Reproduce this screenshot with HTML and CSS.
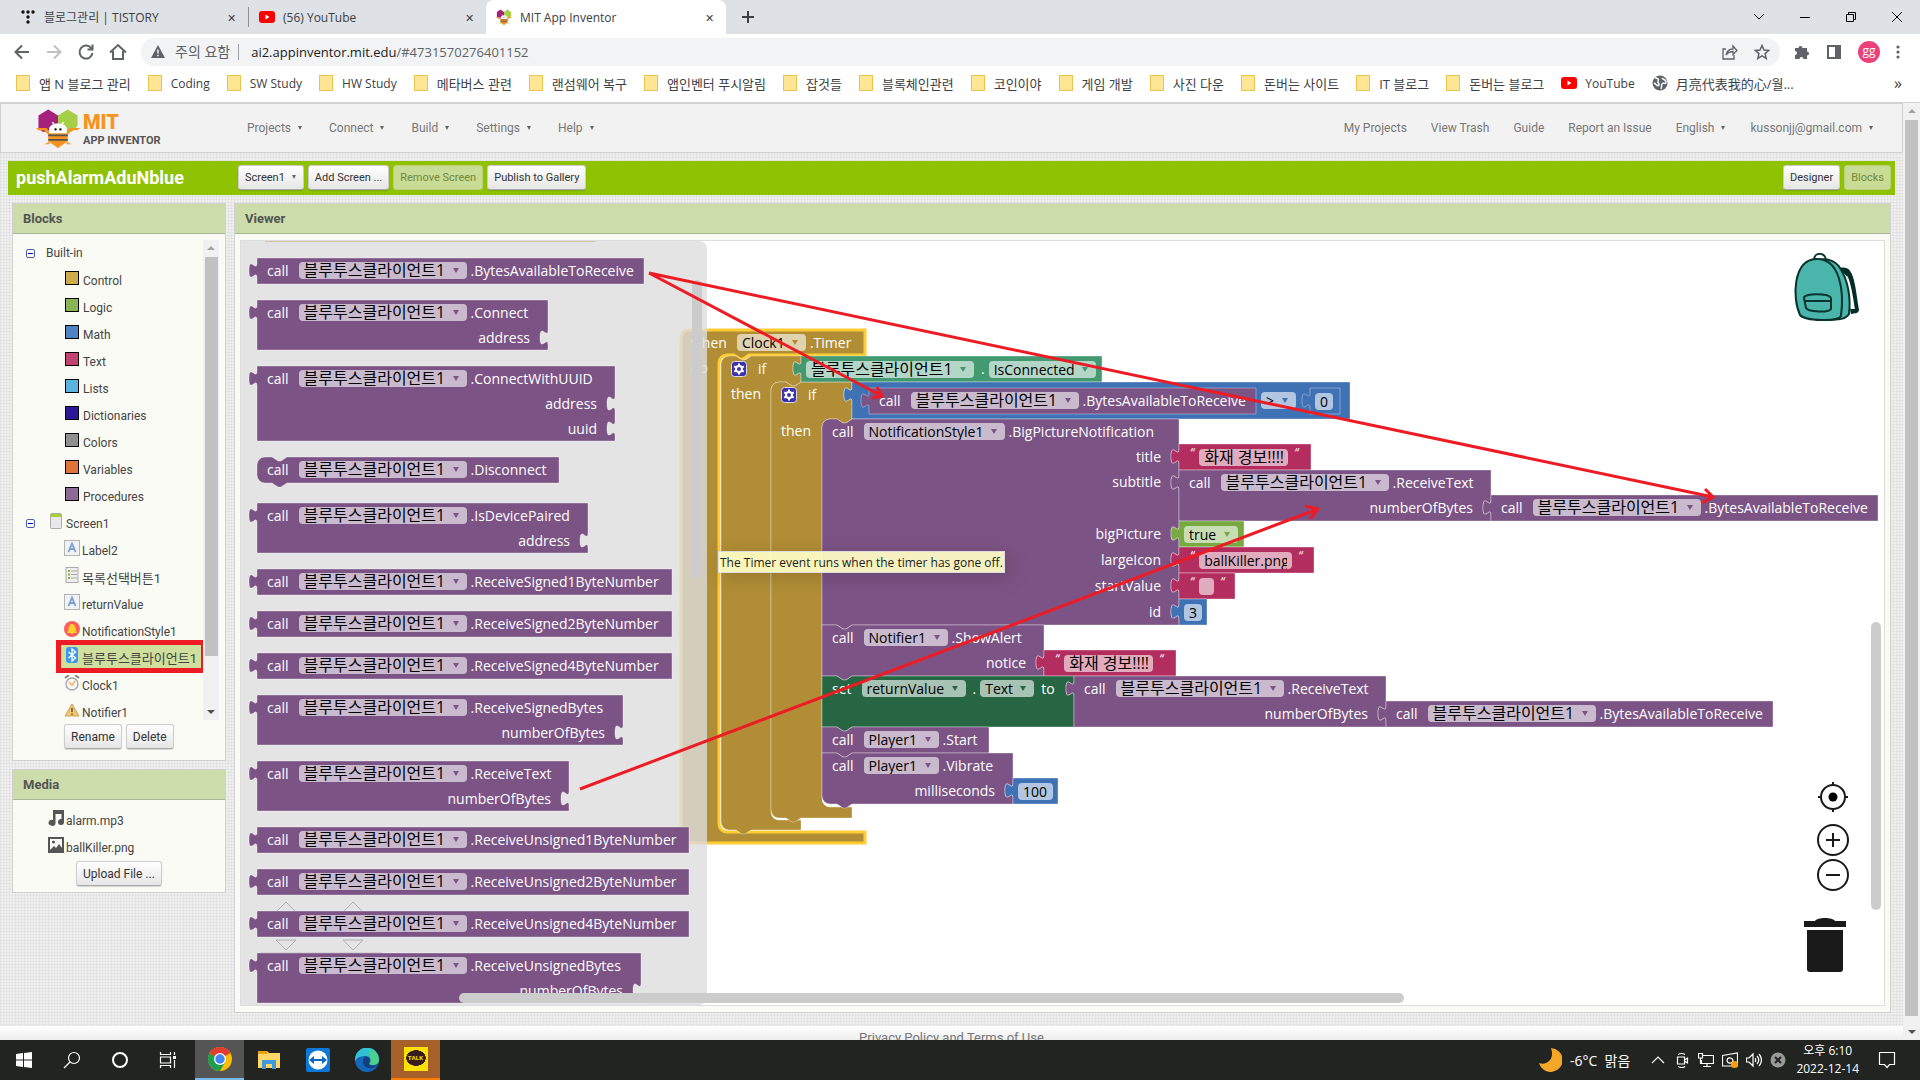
FILE: index.html
```html
<!DOCTYPE html>
<html lang="ko">
<head>
  <meta charset="UTF-8">
  <meta name="viewport" content="width=device-width, initial-scale=1.0">
  <title>MIT App Inventor</title>
  <link rel="stylesheet" href="styles.css">
</head>
<body>

<!-- browser tabs -->
<div class="tabs">
  <div class="tab">
    <svg class="favicon" width="16" height="16" viewBox="0 0 16 16"><g fill="#111"><circle cx="3" cy="3" r="1.7"/><circle cx="8" cy="3" r="1.7"/><circle cx="13" cy="3" r="1.7"/><circle cx="8" cy="8" r="1.7"/><circle cx="8" cy="13" r="1.7"/></g></svg>
    <span>블로그관리 | TISTORY</span><button class="tab-close">✕</button>
  </div>
  <div class="tab split">
    <svg class="favicon" width="16" height="16" viewBox="0 0 16 16"><rect y="2" width="16" height="12" rx="3" fill="#f00"/><path d="M6.5 5.5v5l4-2.5z" fill="#fff"/></svg>
    <span>(56) YouTube</span><button class="tab-close">✕</button>
  </div>
  <div class="tab active">
    <svg class="favicon" width="16" height="16" viewBox="0 0 54 54"><use href="#bee"/></svg>
    <span>MIT App Inventor</span><button class="tab-close">✕</button>
  </div>
  <button class="tab-new"><svg width="12" height="12" viewBox="0 0 12 12"><path d="M6 0v12M0 6h12" stroke="#3c4043" stroke-width="2"/></svg></button>
  <div class="window-buttons">
    <button><svg width="12" height="12" viewBox="0 0 12 12"><path d="M1 3l5 5 5-5" class="line"/></svg></button>
    <button><svg width="12" height="12" viewBox="0 0 12 12"><path d="M1 6.500h10" class="line"/></svg></button>
    <button><svg width="12" height="12" viewBox="0 0 12 12"><path d="M1.500 3.500h7v7h-7zM3.500 3.500v-2h7v7h-2" class="line"/></svg></button>
    <button><svg width="12" height="12" viewBox="0 0 12 12"><path d="M1 1l10 10M11 1L1 11" class="line"/></svg></button>
  </div>
</div>

<!-- address bar -->
<div class="toolbar">
  <button class="nav-btn"><svg width="18" height="18" viewBox="0 0 18 18"><path d="M16 9H3M9 2.500L2.500 9 9 15.500" class="nav-line"/></svg></button>
  <button class="nav-btn off"><svg width="18" height="18" viewBox="0 0 18 18"><path d="M2 9h13M9 2.500L15.500 9 9 15.500" class="nav-line"/></svg></button>
  <button class="nav-btn"><svg width="18" height="18" viewBox="0 0 18 18"><path d="M14.500 5.500A6.500 6.500 0 1 0 15.500 10M15.500 1.500v5h-5" class="nav-line"/></svg></button>
  <button class="nav-btn"><svg width="18" height="18" viewBox="0 0 18 18"><path d="M1 9.500L9 2l8 7.500M4 8v8h10V8" class="nav-line"/></svg></button>
  <div class="omnibox">
    <svg width="14" height="14" viewBox="0 0 14 14"><path d="M7 0l7 13H0z" fill="#5f6368"/><path d="M7 4.500v4M7 9.800v1.500" stroke="#fff" stroke-width="1.400"/></svg>
    <span class="warn">주의 요함</span>
    <span class="url"><b>ai2.appinventor.mit.edu</b>/#4731570276401152</span>
    <svg width="16" height="16" viewBox="0 0 16 16"><path d="M4 5H1v10h11v-4M4 11c1-4 3-6 7-6V2l4 4.500-4 4v-3c-3 0-5 1-7 3.500z" fill="none" stroke="#5f6368" stroke-width="1.300"/></svg>
    <svg width="16" height="16" viewBox="0 0 16 16"><path d="M8 1.500l2 4.500 4.700.4-3.600 3.200 1.100 4.800L8 11.900l-4.200 2.500 1.100-4.800L1.300 6.400 6 6z" fill="none" stroke="#5f6368" stroke-width="1.500"/></svg>
  </div>
  <div class="extensions">
    <svg width="16" height="16" viewBox="0 0 16 16"><path d="M1 4h3.500a2 2 0 1 1 4 0H13v3.500a2 2 0 1 1 0 4V15H9.500a2 2 0 0 0-4 0H1v-4a2 2 0 0 0 0-4z" fill="#5f6368"/></svg>
    <svg width="16" height="16" viewBox="0 0 16 16"><path d="M1 1h14v14H1z" fill="#5f6368"/><path d="M3 3h6v10H3z" fill="#fff"/></svg>
    <span class="avatar">gg</span>
    <svg width="4" height="16" viewBox="0 0 4 16"><g fill="#5f6368"><circle cx="2" cy="3" r="1.600"/><circle cx="2" cy="8" r="1.600"/><circle cx="2" cy="13" r="1.600"/></g></svg>
  </div>
</div>

<nav class="bookmarks">
  <a href="#" class="folder ko">앱 N 블로그 관리</a>
  <a href="#" class="folder">Coding</a>
  <a href="#" class="folder">SW Study</a>
  <a href="#" class="folder">HW Study</a>
  <a href="#" class="folder ko">메타버스 관련</a>
  <a href="#" class="folder ko">랜섬웨어 복구</a>
  <a href="#" class="folder ko">앱인벤터 푸시알림</a>
  <a href="#" class="folder ko">잡것들</a>
  <a href="#" class="folder ko">블록체인관련</a>
  <a href="#" class="folder ko">코인이야</a>
  <a href="#" class="folder ko">게임 개발</a>
  <a href="#" class="folder ko">사진 다운</a>
  <a href="#" class="folder ko">돈버는 사이트</a>
  <a href="#" class="folder ko">IT 블로그</a>
  <a href="#" class="folder ko">돈버는 블로그</a>
  <a href="#"><svg width="16" height="16" viewBox="0 0 16 16"><rect y="2" width="16" height="12" rx="3" fill="#f00"/><path d="M6.500 5.500v5l4-2.500z" fill="#fff"/></svg>YouTube</a>
  <a href="#" class="ko"><svg width="16" height="16" viewBox="0 0 16 16"><circle cx="8" cy="8" r="7.500" fill="#5f6368"/><path d="M3 3c3 0 4 1 3 3s2 2 1 4-3-1-5-2M10 3c1 2 4 1 4 4s-3 0-4 2 0 3-1 5" fill="none" stroke="#fff" stroke-width="1.500"/></svg>月亮代表我的心/월...</a>
  <span class="more">»</span>
</nav>

<div class="page">
  <div class="app">
    <header class="app-header">
      <svg width="44" height="40" viewBox="0 0 54 54" preserveAspectRatio="none">
        <g id="bee">
          <path d="M3 10L15 2l12 8v17l-8 5H8l-5-5z" fill="#a5217c"/>
          <path d="M27 10l12-8 12 8v14l-7 8H32l-5-5z" fill="#a4cf46"/>
          <path d="M0 27h13l3 4h22l3-4h13l-3 3h-7l-7 8H17l-7-8H3z" fill="#f7931e"/>
          <path d="M15 33h24v12l-12 9-12-9z" fill="#f7931e"/>
          <path d="M10 49h6l3-9h16l3 9h6l-8-4-9 9-9-9z" fill="#f7931e"/>
          <path d="M15 37h24M15 43h24" stroke="#555" stroke-width="2.500"/>
          <path d="M16 34V29c0-5 5-8 11-8s11 3 11 8v5z" fill="#fff"/>
          <path d="M23 23l-3-4M31 23l3-4" stroke="#fff" stroke-width="2"/>
          <circle cx="24" cy="29" r="1.500"/><circle cx="30" cy="29" r="1.500"/>
        </g>
      </svg>
      <div class="brand"><strong>MIT</strong><span>APP INVENTOR</span></div>
      <div class="menu">
        <button class="drop">Projects</button>
        <button class="drop">Connect</button>
        <button class="drop">Build</button>
        <button class="drop">Settings</button>
        <button class="drop">Help</button>
      </div>
      <div class="menu right">
        <a href="#">My Projects</a>
        <a href="#">View Trash</a>
        <a href="#">Guide</a>
        <a href="#">Report an Issue</a>
        <button class="drop">English</button>
        <button class="drop">kussonjj@gmail.com</button>
      </div>
    </header>

    <div class="project-bar">
      <h1>pushAlarmAduNblue</h1>
      <button class="btn small drop">Screen1</button>
      <button class="btn small">Add Screen ...</button>
      <button class="btn small" disabled>Remove Screen</button>
      <button class="btn small">Publish to Gallery</button>
      <span class="spacer"></span>
      <button class="btn small">Designer</button>
      <button class="btn small" disabled>Blocks</button>
    </div>

    <main>
      <aside>
        <section class="panel">
          <h2>Blocks</h2>
          <div class="tree-box">
            <ul class="tree" id="tree"></ul>
            <div class="scrollbar"><i></i></div>
          </div>
          <div class="actions">
            <button class="btn">Rename</button>
            <button class="btn">Delete</button>
          </div>
        </section>
        <section class="panel media">
          <h2>Media</h2>
          <ul>
            <li><svg width="16" height="16" viewBox="0 0 16 16"><path d="M5 0h11v12a3 3 0 1 1-2.500-3V4H7.500v9A3.500 3 0 1 1 5 10z" fill="#555"/></svg>alarm.mp3</li>
            <li><svg width="16" height="16" viewBox="0 0 16 16"><path d="M0 0h16v16H0zM2 2v11l4-4 2 2 3-4 3 4V2z" fill="#555" fill-rule="evenodd"/><circle cx="5.500" cy="5" r="1.500" fill="#555"/></svg>ballKiller.png</li>
          </ul>
          <button class="btn">Upload File ...</button>
        </section>
      </aside>

      <section class="panel viewer">
        <h2>Viewer</h2>
        <div class="workspace" id="workspace">
          <div id="canvas"></div>
          <svg class="backpack" width="68" height="70" viewBox="0 0 68 70">
            <path d="M46 15c14-3 15 8 20 42-1 4-4 3-8 4l-1-5 3-1c-2-20-3-32-11-36z" fill="#052d28"/>
            <path d="M54 22c5 10 7 30 8 34h-4z" fill="#fff"/>
            <path d="M26 7c8-2 17 1 21 8 8 12 11 30 9 46-3 5-10 6-22 6z" fill="#49b5ab" stroke="#08332e" stroke-width="2"/>
            <path d="M7 62C-1 45 0 7 23 6c25-1 28 34 25 57-3 6-36 5-41-1z" fill="#49b5ab" stroke="#08332e" stroke-width="2"/>
            <path d="M21 6c1-7 11-7 12 1M11 45c-1-5 25-5 27 0v11c-2 4-23 3-25-1zM12 48h26" fill="none" stroke="#08332e" stroke-width="2"/>
          </svg>
          <div class="zoom">
            <button><svg width="32" height="32" viewBox="0 0 32 32"><circle cx="16" cy="16" r="12" class="ring"/><circle cx="16" cy="16" r="4.500"/><path d="M16 1v4M16 27v4M1 16h4M27 16h4" class="ring"/></svg></button>
            <button><svg width="32" height="32" viewBox="0 0 32 32"><circle cx="16" cy="16" r="15" class="ring"/><path d="M16 9v14M9 16h14" class="ring"/></svg></button>
            <button><svg width="32" height="32" viewBox="0 0 32 32"><circle cx="16" cy="16" r="15" class="ring"/><path d="M9 16h14" class="ring"/></svg></button>
          </div>
          <svg class="trash" width="42" height="54" viewBox="0 0 42 54"><path d="M0 3h11c2-4 18-4 20 0h11v6H0zM3 12h36v39q0 3-3 3H6q-3 0-3-3z" fill="#1a1a1a"/></svg>
          <svg class="ghost" width="130" height="56" viewBox="0 0 130 56"><path d="M16 12L26 2l10 10zM83 12L93 2l10 10zM16 40l10 10 10-10zM83 40l10 10 10-10zM0 53h122" fill="none" stroke="#000"/></svg>
          <div class="flyout" id="flyout"></div>
          <i class="bar flyout-bar"></i>
          <i class="bar v-bar"></i>
          <i class="bar h-bar"></i>
          <div class="tooltip">The Timer event runs when the timer has gone off.</div>
          <svg class="arrows" width="1640" height="760" viewBox="0 0 1640 760">
            <path d="M408 32L641 155M636 146l5 9-10 2M408 32l1064 224M1464 248l8 8-11 6M339 548l738-280M1064 265l13 3-8 10"/>
          </svg>
        </div>
      </section>
    </main>
    <footer><a href="#">Privacy Policy and Terms of Use</a></footer>
  </div>
  <div class="scrollbar page-scroll"><i></i></div>
</div>

<div class="taskbar">
  <button><svg width="16" height="16" viewBox="0 0 16 16"><path d="M0 2l7-1v6.500H0zM8 1l8-1v7.500H8zM0 8.500h7V15l-7-1zM8 8.500h8V16l-8-1z" fill="#fff"/></svg></button>
  <button><svg width="18" height="18" viewBox="0 0 18 18"><path d="M7 11l-6 6" class="tray-line"/><circle cx="11" cy="7" r="5.500" class="tray-line"/></svg></button>
  <button><svg width="18" height="18" viewBox="0 0 18 18"><circle cx="9" cy="9" r="7" fill="none" stroke="#fff" stroke-width="2"/></svg></button>
  <button><svg width="18" height="18" viewBox="0 0 18 18"><path d="M1.500 1v2.500h10V1M1.500 6h10v6h-10zM1.500 17v-2.500h10V17M15.500 1v3M15.500 9v8" class="tray-line"/><path d="M14 5h3v3h-3z" fill="#fff"/></svg></button>
  <button class="wide running"><svg width="24" height="24" viewBox="0 0 24 24"><circle cx="12" cy="12" r="12" fill="#fbbc05"/><path d="M12 12L1.600 6A12 12 0 0 0 12 24l5-9z" fill="#1e9d4d"/><path d="M12 12L1.600 6a12 12 0 0 1 20.800 0z" fill="#e33b2e"/><circle cx="12" cy="12" r="6" fill="#fff"/><circle cx="12" cy="12" r="4.700" fill="#4285f4"/></svg></button>
  <button class="wide"><svg width="22" height="20" viewBox="0 0 22 20"><path d="M0 1h9l2 2h11v15H0z" fill="#ffd766"/><path d="M0 1h9l1 3H0z" fill="#e6a117"/><path d="M4 19v-9h14v9h-4v-5H8v5z" fill="#3f9be0"/></svg></button>
  <button class="wide"><svg width="24" height="24" viewBox="0 0 24 24"><rect width="24" height="24" rx="2" fill="#0e78d8"/><circle cx="12" cy="12" r="9.500" fill="#fff"/><path d="M3 12l5-4v3h8V8l5 4-5 4v-3H8v3z" fill="#0e66c0"/></svg></button>
  <button class="wide"><svg width="24" height="24" viewBox="0 0 24 24"><circle cx="12" cy="12" r="12" fill="#1467b8"/><path d="M0 11A12 12 0 0 1 24 12c0 5-7 6-10 4 4-3 1-8-3-8C5 8 1 10 0 14z" fill="#33bfd4"/><path d="M14 1a12 12 0 0 1 10 11c0 5-7 6-10 4 2-2 2-4 1-6z" fill="#55d86a" opacity=".7"/><path d="M8 13c0-3 2-5 4-4 3 1 3 4 2 7 2 2 6 2 9 0-3 6-15 6-15-3z" fill="#123f80"/></svg></button>
  <button class="wide alert"><span class="talk">TALK</span></button>
  <div class="tray">
    <svg width="24" height="24" viewBox="0 0 24 24"><path d="M13 0a12 12 0 1 1-12 15C9 18 17 11 13 0z" fill="#f6a728"/></svg>
    <span class="weather">-6°C&nbsp; 맑음</span>
    <svg width="16" height="16" viewBox="0 0 16 16"><path d="M2 11l6-6 6 6" class="tray-line"/></svg>
    <svg width="16" height="16" viewBox="0 0 16 16"><path d="M3.500 5h7v7h-7zM10.500 8l3-2v5l-3-2M4 2.500q4-2 7 0M4 14.500q4 2 7 0" class="tray-line"/></svg>
    <svg width="16" height="16" viewBox="0 0 16 16"><path d="M5 3.500h10.500v8H3.500V8M9 12v3M5 14.500h8M.5 1.500h4V6h-4zM2.500 6v6" class="tray-line"/></svg>
    <svg width="16" height="16" viewBox="0 0 16 16"><path d="M.5 3.500L15.500 1v13L.5 14zM5 9c0-4 5-4 6-1M11 8c0 4-5 4-6 1" class="tray-line"/><circle cx="12.500" cy="12.500" r="3.500" fill="#ff9d0a"/></svg>
    <svg width="16" height="16" viewBox="0 0 16 16"><path d="M.5 6h2.500l4-4v12l-4-4H.5zM9 6q1.500 2 0 4M11 4q3.500 4 0 8M13 2q5 6 0 12" class="tray-line"/></svg>
    <svg width="16" height="16" viewBox="0 0 16 16"><circle cx="8" cy="8" r="7.500" fill="#999"/><path d="M5 5l6 6M11 5l-6 6" stroke="#222" stroke-width="2"/></svg>
    <div class="clock">오후 6:10<br>2022-12-14</div>
    <svg width="18" height="18" viewBox="0 0 18 18"><path d="M1.500 1.500h15v12h-5l-2.500 3-2.500-3h-5z" class="tray-line"/></svg>
  </div>
</div>

<script src="blocks.js"></script>
</body>
</html>
```
FILE: styles.css
```css
* { box-sizing: border-box; }
body {
  margin: 0; height: 100vh; display: flex; flex-direction: column; overflow: hidden;
  font-family: Roboto, "Noto Sans CJK KR", sans-serif; font-size: 12px; color: #444; background: #fff;
}
button { font-family: inherit; font-size: inherit; color: inherit; background: none; border: none; padding: 0; cursor: pointer; }
a { color: inherit; text-decoration: none; }
ul { list-style: none; margin: 0; padding: 0; }
svg { display: block; flex: none; }
.line { fill: none; stroke: #000; }
.spacer { flex: 1; }

/* browser */
.tabs, .toolbar, .bookmarks { font-family: "Open Sans", "Noto Sans CJK KR", sans-serif; color: #3c4043; flex: none; display: flex; align-items: center; }
.tabs { height: 34px; background: #dee1e6; }
.tab { width: 240px; height: 34px; padding: 0 12px 0 10px; display: flex; align-items: center; gap: 8px; }
.tab:first-child { width: 248px; padding-left: 20px; }
.tab span { flex: 1; white-space: nowrap; }
.tab.split { border-left: 1px solid #8c9096; width: 238px; height: 20px; }
.tab.active { background: #fff; border-radius: 8px 8px 0 0; width: 240px; }
.tab-close { font-size: 11px; width: 10px; }
.tab-new { margin-left: 16px; }
.window-buttons { margin-left: auto; display: flex; margin-right: 17px; gap: 34px; }
.toolbar { height: 36px; padding: 0 20px 0 13px; }
.nav-btn { margin-right: 14px; }
.nav-btn.off { opacity: .4; }
.nav-line { fill: none; stroke: #5f6368; stroke-width: 2; }
.omnibox { flex: 1; height: 28px; border-radius: 14px; background: #f1f3f4; display: flex; align-items: center; padding: 0 10px; gap: 10px; font-size: 13px; color: #5f6368; }
.omnibox svg:last-child { margin-left: 6px; }
.warn { font-size: 14px; padding-right: 8px; margin-right: 2px; border-right: 1px solid #9aa0a6; line-height: 16px; }
.url { flex: 1; }
.url b { font-weight: normal; color: #202124; }
.extensions { display: flex; align-items: center; gap: 16px; margin-left: 14px; }
.avatar { width: 22px; height: 22px; border-radius: 50%; background: #ec407a; color: #fff; text-align: center; line-height: 19px; }
.bookmarks { height: 33px; padding: 0 18px 6px 16px; gap: 17px; border-bottom: 1px solid #d5d5d5; white-space: nowrap; }
.bookmarks a { display: flex; align-items: center; gap: 8px; }
.bookmarks .ko { font-size: 13px; }
.folder::before { content: ""; width: 12px; height: 14px; background: #ffe694; border: 1px solid #e8c44e; margin-right: 1px; }
.more { margin-left: auto; font-size: 16px; }

/* page frame */
.page { flex: 1; min-height: 0; display: flex; }
.app { flex: 1; min-width: 0; display: flex; flex-direction: column;
  background: repeating-linear-gradient(90deg, rgba(0,0,0,.04) 0 1px, transparent 1px 3px), repeating-linear-gradient(rgba(0,0,0,.04) 0 1px, transparent 1px 3px) #efefef; }
.scrollbar { width: 17px; background: #f1f1f1; display: flex; flex-direction: column; align-items: center; justify-content: space-between; padding: 6px 0; }
.scrollbar::before, .scrollbar::after { content: ""; border: 4px solid transparent; border-top: none; border-bottom-color: #a3a3a3; }
.scrollbar::after { border-bottom: none; border-top: 4px solid #505050; }
.scrollbar i { width: 13px; background: #c1c1c1; flex: 1; margin: 7px 0 54px; }
.page-scroll i { margin-bottom: 14px; }

.app-header { height: 50px; flex: none; background: #f2f2f2; border: 1px solid #d0d0d0; display: flex; align-items: center; padding: 0 28px 0 35px; color: #777; }
.brand { width: 75px; margin: 0 89px 0 3px; font-weight: bold; white-space: nowrap; }
.brand strong { display: block; color: #f7931e; font-size: 20px; line-height: 24px; }
.brand span { font-size: 11px; line-height: 13px; color: #555; display: block; }
.menu { display: flex; gap: 26px; }
.menu.right { margin-left: auto; gap: 24px; }
.drop::after { content: ""; display: inline-block; border: 2px solid transparent; border-top: 4px solid #666; border-bottom: none; margin: 0 1px 2px 7px; }

.project-bar { flex: none; height: 34px; margin: 8px; padding: 0 4px 2px 8px; background: #8fc202; display: flex; align-items: center; gap: 4px; }
.project-bar h1 { margin: 0; width: 218px; font-size: 18px; color: #fff; }
.btn { height: 25px; padding: 0 6px; border: 1px solid #ccc; border-bottom-color: #aaa; border-radius: 3px; background: linear-gradient(#fff, #e6e6e6); color: #333; box-shadow: 0 1px 1px rgba(0,0,0,.15); white-space: nowrap; }
.btn.small { font-size: 11px; }
.btn:disabled { background: #c9dc95; border-color: #b9d173; color: #71883b; box-shadow: none; }

main { flex: 1; min-height: 0; display: flex; align-items: stretch; gap: 8px; padding: 0 12px 13px; }
aside { width: 214px; display: flex; flex-direction: column; gap: 8px; }
.panel { background: #fafbf4; border: 1px solid #d0d0d0; }
.panel h2 { margin: 0; height: 30px; line-height: 29px; padding-left: 10px; font-size: 13px; background: #ccdcaa; border-bottom: 1px solid #aab895; color: #555; }
.tree-box { display: flex; height: 480px; margin: 6px 6px 4px 0; overflow: hidden; }
.tree { flex: 1; padding-left: 13px; white-space: nowrap; }
.tree li { height: 27px; display: flex; align-items: center; padding: 2px 0 0 38px; gap: 2px; width: 177px; }
.tree .ko { font-size: 13px; }
.tree li svg { margin: -6px 0 0 0; }
.tree li.root { padding-left: 0; gap: 11px; height: 26px; padding-top: 0; }
.tree li.screen { padding-left: 0; gap: 2px; }
.tree li.screen svg { margin-left: 11px; }
.toggle { width: 9px; height: 9px; border: 1px solid #4b5fa8; border-radius: 2px; background: #fff; display: flex; align-items: center; }
.toggle::before { content: ""; width: 5px; height: 1px; background: #00c; margin-left: 1px; }
.tree .swatch { width: 14px; height: 14px; border: 1px solid #000; margin: -6px 2px 0 1px; }
.tree li.selected { background: #cfdf9e; outline: 5px solid #ed1c24; height: 23px; margin: 1px 0 3px 35px; padding-left: 3px; width: 140px; }
.actions { padding: 0 0 11px 51px; display: flex; gap: 4px; }
.media { padding-bottom: 6px; }
.media ul { padding: 7px 0 0 35px; }
.media li { height: 27px; display: flex; align-items: center; gap: 2px; }
.media li svg { margin-top: -5px; }
.media .btn { margin: 0 0 0 63px; display: block; }

.viewer { flex: 1; min-width: 0; display: flex; flex-direction: column; }
.workspace { flex: 1; min-height: 0; position: relative; overflow: hidden; margin: 6px 5px; border: 1px solid #ddd; background: #fff; font: 14px "Open Sans", "Noto Sans CJK KR", sans-serif; }
.backpack { position: absolute; top: 12px; right: 23px; }
.zoom { position: absolute; right: 35px; bottom: 114px; display: flex; flex-direction: column; gap: 3px; }
.zoom button:first-child { margin-bottom: 8px; }
.ring { fill: none; stroke: #1a1a1a; stroke-width: 2; }
.trash { position: absolute; right: 38px; bottom: 33px; }
.ghost { position: absolute; left: 19px; top: 659px; }
.flyout { position: absolute; left: 0; top: 0; bottom: 0; width: 466px; padding: 17px 16px; background: rgba(221,221,221,.8); border-radius: 0 8px 8px 0; display: flex; flex-direction: column; align-items: flex-start; gap: 16px; overflow: hidden; }
.flyout::before { content: ""; position: absolute; left: 24px; top: 0; width: 330px; height: 1px; background: #cfc3a4; }
.flyout .block { position: relative; flex: none; }
.flyout .stack { margin-bottom: 4px; }
.bar { position: absolute; border-radius: 5px; background: #ccc; }
.flyout-bar { left: 451px; top: 39px; width: 10px; height: 298px; }
.v-bar { right: 3px; top: 381px; width: 10px; height: 288px; }
.h-bar { left: 218px; bottom: 2px; width: 945px; height: 10px; }
.tooltip { position: absolute; left: 477px; top: 310px; padding: 2px 1px; height: 22px; font-size: 12px; line-height: 17px; color: #222; background: rgba(255,255,199,.92); border: 1px solid #ddd; box-shadow: 4px 4px 20px 1px rgba(0,0,0,.15); white-space: nowrap; }
.arrows { position: absolute; left: 0; top: 0; fill: none; stroke: #ed1c24; stroke-width: 3; pointer-events: none; }

/* blocks */
.block { position: absolute; color: #fff; }
.shape { position: absolute; left: 0; top: 0; overflow: visible; stroke: rgba(255,255,255,.35); stroke-width: 1; }
.hat .shape { stroke: #fc3; stroke-width: 3; }
.row { position: relative; height: 25px; line-height: 24px; padding-left: 10px; display: flex; align-items: center; white-space: nowrap; }
.row.bare { padding-left: 5px; }
.row.arg { justify-content: flex-end; padding-right: 18px; }
.row.filled { height: 26px; }
.row.tall { height: 51px; align-items: flex-start; }
.row.gap { height: 11px; }
.word { margin-right: 10px; }
.dot { margin: 0 4px 0 3px; }
.field { position: relative; margin-right: 4px; display: flex; align-items: center; }
.field::after { content: ""; position: absolute; right: 8px; border: 3px solid transparent; border-top: 5px solid var(--c); border-bottom: none; }
.field select, .row input { appearance: none; margin: 0; height: 17px; line-height: 17px; padding: 0 21px 0 5px; border: none; border-radius: 4px; background: rgba(255,255,255,.6); font-family: inherit; font-size: 14px; color: #000; }
.row input { padding: 0 5px; }
.row .ko { font-size: 16px; }
.quote { margin: -8px 5px 0 6px; font-size: 12px; font-style: italic; }
.gear { margin-right: 11px; }
.op { padding-left: 409px; height: 37px; }

footer { height: 14px; flex: none; background: linear-gradient(#fff, #eee); text-align: center; overflow: hidden; color: #777; padding-top: 4px; font-size: 13px; }

/* taskbar */
.taskbar { height: 40px; flex: none; background: #222422; display: flex; color: #fff; font-family: "Open Sans", "Noto Sans CJK KR", sans-serif; }
.taskbar button { width: 48px; display: flex; align-items: center; justify-content: center; }
.taskbar .wide { width: 49px; }
.taskbar .running { background: #555; border-bottom: 2px solid #76b9ed; margin-left: 3px; }
.taskbar .alert { background: #a8602a; border-bottom: 2px solid #ff7b00; }
.talk { width: 24px; height: 24px; background: #fae100; color: #fae100; font-size: 6px; font-weight: bold; line-height: 22px; background-image: radial-gradient(ellipse 10px 8px at 12px 11px, #371d1e 95%, transparent); }
.tray-line { fill: none; stroke: #fff; stroke-width: 1.2; }
.tray { margin-left: auto; display: flex; align-items: center; gap: 8px; padding-right: 24px; }
.weather { font-size: 14px; margin-right: 12px; }
.clock { text-align: center; line-height: 18px; margin: 0 11px 0 2px; }
```
FILE: blocks.js
```js
const BT = '블루투스클라이언트1';
const PURPLE = '#7c5385', GOLD = '#b18e35', BLUE = '#3f71b5', PINK = '#b32d5e', GREEN = '#439970', DARK = '#266643', LIME = '#77ab41';

const isKo = t => /[가-힣]/.test(t) ? 'ko' : '';
const select = t => `<span class="field"><select class="${isKo(t)}" aria-label="${t}"><option>${t}</option></select></span>`;
const input = (t, w) => `<input class="${isKo(t)}" aria-label="value" value="${t}" style="width:${w}px">`;
const word = t => `<span class="word">${t}</span>`;
const gear = `<svg class="gear" width="16" height="16" viewBox="0 0 16 16"><rect x=".5" y=".5" width="15" height="15" rx="3" fill="#3c32b0" stroke="#ddd"/><circle cx="8" cy="8" r="3" fill="none" stroke="#fff" stroke-width="2"/><path d="M8 2.500v2M8 11.500v2M3.200 5.300l1.800 1M11 9.700l1.800 1M3.200 10.700l1.800-1M11 6.300l1.800-1" stroke="#fff" stroke-width="2"/></svg>`;
const row = (html, cls = '') => `<div class="row ${cls}">${html}</div>`;
const call = (comp, method) => row(word('call') + select(comp) + method);
const text = (t, w) => row(`<span class="quote">“</span>${input(t, w)}<span class="quote">“</span>`, 'bare filled');

function outline(b) {
  const socket = y => `V${y + 5}c0 10 -8 -8 -8 7.5s8 -2.5 8 7.5`;
  let d = 'M0 0';
  if (b.stack) d = (b.first ? 'M0 8A8 8 0 0 1 8 0' : 'M0 0') + 'H15l6 4 3 0 6 -4';
  d += `H${b.w}` + (b.sockets || []).map(socket).join('') + `V${b.h}`;
  if (b.stack) d += 'H30l-6 4 -3 0 -6 -4' + (b.last ? 'H8a8 8 0 0 1 -8 -8' : 'H0');
  else d += 'H0V20c0 -10 -8 8 -8 -7.5s8 2.5 8 -7.5';
  return d + 'Z';
}

function addBlock(parent, b) {
  const el = document.createElement('div');
  el.className = 'block ' + (b.stack ? 'stack ' : '') + (b.cls || '');
  el.style.cssText = `width:${b.w}px;height:${b.h}px;--c:${b.color}`;
  if (b.x !== undefined) el.style.cssText += `;left:${b.x}px;top:${b.y}px`;
  el.innerHTML = `<svg class="shape" width="${b.w}" height="${b.h}"><path d="${b.path || outline(b)}" fill="${b.color}"/></svg>` + b.rows;
  parent.appendChild(el);
}

// flyout: [method, width, arguments]
[
  ['BytesAvailableToReceive', 387], ['Connect', 291, 'address'], ['ConnectWithUUID', 358, 'address', 'uuid'],
  ['Disconnect', 302], ['IsDevicePaired', 331, 'address'], ['ReceiveSigned1ByteNumber', 415],
  ['ReceiveSigned2ByteNumber', 415], ['ReceiveSigned4ByteNumber', 415], ['ReceiveSignedBytes', 366, 'numberOfBytes'],
  ['ReceiveText', 312, 'numberOfBytes'], ['ReceiveUnsigned1ByteNumber', 432], ['ReceiveUnsigned2ByteNumber', 432],
  ['ReceiveUnsigned4ByteNumber', 432], ['ReceiveUnsignedBytes', 384, 'numberOfBytes']
].forEach(([name, w, ...args]) => addBlock(document.getElementById('flyout'), {
  w, h: args.length ? 25 + args.length * 25 : 26, color: PURPLE,
  stack: name === 'Disconnect', first: true, last: true,
  sockets: args.map((a, i) => 25 + i * 25),
  rows: call(BT, '.' + name) + args.map(a => row(a, 'arg')).join('')
}));

// blocks on the workspace
const receive = (x, y) => [
  { x, y, w: 312, h: 51, color: PURPLE, sockets: [25], rows: call(BT, '.ReceiveText') + row('numberOfBytes', 'arg filled') },
  { x: x + 312, y: y + 25, w: 387, h: 26, color: PURPLE, rows: call(BT, '.BytesAvailableToReceive') }
];
[
  { x: 440, y: 89, w: 184, h: 513, color: GOLD, cls: 'hat',
    path: 'M0 8A8 8 0 0 1 8 0H184V25H68l-6 4h-3l-6 -4H46a8 8 0 0 0 -8 8V494a8 8 0 0 0 8 8H184V513H0Z',
    rows: row('<span class="word">when</span>' + select('Clock1') + '.Timer') + row('do', 'filled') },
  { x: 480, y: 115, w: 80, h: 474, color: GOLD,
    path: 'M0 8A8 8 0 0 1 8 0H15l6 4 3 0 6 -4H80V5c0 10 -8 -8 -8 7.5s8 -2.5 8 7.5V26H80l-6 4h-3l-6 -4H58a8 8 0 0 0 -8 8V456a8 8 0 0 0 8 8H80V474H30l-6 4h-3l-6 -4H8a8 8 0 0 1 -8 -8Z',
    rows: row(gear + 'if') + row('then') },
  { x: 530, y: 141, w: 81, h: 436, color: GOLD,
    path: 'M0 8A8 8 0 0 1 8 0H15l6 4 3 0 6 -4H81V5c0 10 -8 -8 -8 7.5s8 -2.5 8 7.5V37H81l-6 4h-3l-6 -4H59a8 8 0 0 0 -8 8V417a8 8 0 0 0 8 8H81V436H30l-6 4h-3l-6 -4H8a8 8 0 0 1 -8 -8Z',
    rows: row(gear + 'if') + row('', 'gap') + row('then') },
  { x: 560, y: 115, w: 301, h: 26, color: GREEN, rows: row(select(BT) + '<span class="dot">.</span>' + select('IsConnected'), 'bare filled') },
  { x: 611, y: 141, w: 498, h: 37, color: BLUE, rows: row(select('&gt;'), 'op') },
  { x: 628, y: 147, w: 387, h: 26, color: PURPLE, rows: call(BT, '.BytesAvailableToReceive') },
  { x: 1069, y: 147, w: 30, h: 26, color: BLUE, rows: row(input('0', 18), 'bare filled') },
  { x: 581, y: 178, w: 357, h: 206, color: PURPLE, stack: true, first: true, sockets: [25, 51, 102, 128, 154, 180],
    rows: call('NotificationStyle1', '.BigPictureNotification') + row('title', 'arg filled') + row('subtitle', 'arg tall') +
      ['bigPicture', 'largeIcon', 'startValue', 'id'].map(a => row(a, 'arg filled')).join('') },
  { x: 938, y: 203, w: 132, h: 26, color: PINK, rows: text('화재 경보!!!!', 89) },
  ...receive(938, 229),
  { x: 938, y: 280, w: 65, h: 26, color: LIME, rows: row(select('true'), 'bare filled') },
  { x: 938, y: 306, w: 135, h: 26, color: PINK, rows: text('ballKiller.png', 93) },
  { x: 938, y: 332, w: 56, h: 26, color: PINK, rows: text('', 15) },
  { x: 938, y: 358, w: 28, h: 26, color: BLUE, rows: row(input('3', 18), 'bare filled') },
  { x: 581, y: 384, w: 222, h: 51, color: PURPLE, stack: true, sockets: [25], rows: call('Notifier1', '.ShowAlert') + row('notice', 'arg filled') },
  { x: 803, y: 409, w: 132, h: 26, color: PINK, rows: text('화재 경보!!!!', 89) },
  { x: 581, y: 435, w: 252, h: 51, color: DARK, stack: true, sockets: [0], rows: row(word('set') + select('returnValue') + '<span class="dot">.</span>' + select('Text') + '<span class="dot">to</span>') },
  ...receive(833, 435),
  { x: 581, y: 486, w: 167, h: 26, color: PURPLE, stack: true, rows: call('Player1', '.Start') },
  { x: 581, y: 512, w: 191, h: 51, color: PURPLE, stack: true, last: true, sockets: [25], rows: call('Player1', '.Vibrate') + row('milliseconds', 'arg filled') },
  { x: 772, y: 537, w: 45, h: 26, color: BLUE, rows: row(input('100', 35), 'bare filled') }
].forEach(b => addBlock(document.getElementById('canvas'), b));

// component tree
const icons = {
  label: '<rect x=".5" y=".5" width="15" height="15" fill="#eef1f6" stroke="#b5b5b5"/><path d="M4.500 12L8 3.500 11.500 12M6 9h4" fill="none" stroke="#7d9fd0" stroke-width="1.800"/>',
  list: '<rect x="2" y=".5" width="12" height="15" fill="#eee" stroke="#aaa"/><path d="M4 4h2M4 7.500h2M4 11h2" stroke="#8bb832" stroke-width="2"/><path d="M7 4h6M7 7.500h6M7 11h6" stroke="#aaa"/>',
  bell: '<circle cx="8" cy="8" r="8" fill="#fc5c5c"/><path d="M3.500 11.500Q5 10 5 7.500C5 2 11 2 11 7.500q0 2.500 1.500 4zM7 12.500h2" fill="#ffd02b" stroke="#ffd02b"/>',
  bt: '<rect x="2" width="12" height="16" rx="3" fill="#3f97f2"/><path d="M4.500 5l7 6L8 14V2l3.500 3-7 6" fill="none" stroke="#fff" stroke-width="1.300"/>',
  clock: '<path d="M1 3l4-3M15 3l-4-3" stroke="#888" stroke-width="2"/><circle cx="8" cy="9" r="6" fill="#f5f5f5" stroke="#aaa" stroke-width="1.500"/><path d="M5 7l3 3 3-4" fill="none" stroke="#f3b55a" stroke-width="1.500"/>',
  warn: '<path d="M8 2l7 12H1z" fill="#f6c567" stroke="#c9a15d"/><path d="M8 6v4M8 11.500v1.500" stroke="#555" stroke-width="1.500"/>',
  screen: '<rect x="2.500" y=".5" width="11" height="15" rx="1" fill="#e8e8e8" stroke="#aaa"/><path d="M2.500 1h11v3h-11z" fill="#a5cf3d"/>'
};
const svg = n => `<svg width="16" height="16" viewBox="0 0 16 16">${icons[n]}</svg>`;
const drawers = [['Control', '#cfab4b'], ['Logic', '#88b555'], ['Math', '#4f82c2'], ['Text', '#c44471'], ['Lists', '#5ab4dd'],
  ['Dictionaries', '#2d1799'], ['Colors', '#909090'], ['Variables', '#de743b'], ['Procedures', '#8f6997']];
const parts = [['Label2', 'label'], ['목록선택버튼1', 'list'], ['returnValue', 'label'], ['NotificationStyle1', 'bell'],
  [BT, 'bt'], ['Clock1', 'clock'], ['Notifier1', 'warn']];
document.getElementById('tree').innerHTML =
  '<li class="root"><i class="toggle"></i>Built-in</li>' +
  drawers.map(([n, c]) => `<li><i class="swatch" style="background:${c}"></i>${n}</li>`).join('') +
  `<li class="screen"><i class="toggle"></i>${svg('screen')}Screen1</li>` +
  parts.map(([n, i]) => `<li class="${isKo(n)} ${n === BT ? 'selected' : ''}">${svg(i)}${n}</li>`).join('');
```
